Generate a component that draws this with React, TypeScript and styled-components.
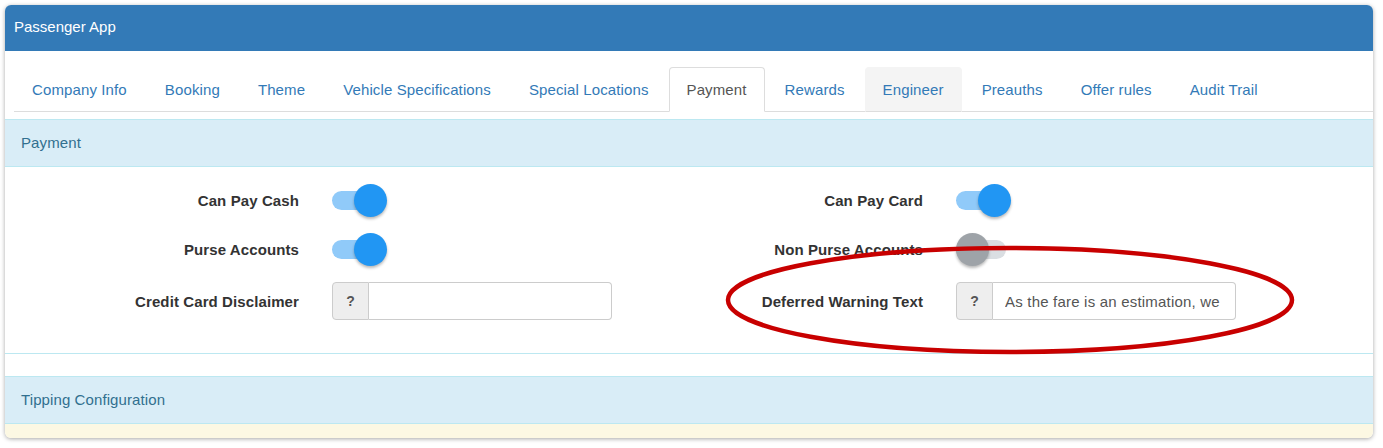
import React from "react";
import styled, { createGlobalStyle } from "styled-components";

const GlobalStyle = createGlobalStyle`
  html, body {
    margin: 0;
    padding: 0;
    background: #fff;
    font-family: "Liberation Sans", Arial, sans-serif;
    font-size: 15px;
    color: #333;
  }
  * {
    box-sizing: border-box;
  }
`;

const Page = styled.div`
  position: relative;
  width: 1383px;
  height: 448px;
  padding: 5px 10px 0 5px;
`;

const Panel = styled.div`
  background: #fff;
  border-radius: 6px;
  overflow: hidden;
  box-shadow: 0 1px 4px rgba(0, 0, 0, 0.35);
`;

const PanelHeading = styled.div`
  height: 46px;
  padding: 0 9px 4px;
  display: flex;
  align-items: center;
  background-color: #337ab7;
  color: #fff;
  font-size: 15px;
`;

const PanelBody = styled.div`
  padding-top: 16px;
`;

const TabList = styled.ul`
  display: flex;
  list-style: none;
  margin: 0 0 7px 9px;
  padding: 0;
  border-bottom: 1px solid #ddd;
`;

const Tab = styled.li<{ $active?: boolean; $hover?: boolean }>`
  margin: 0 2px -1px 0;
  padding: 11px 17px;
  line-height: 21px;
  font-size: 15px;
  letter-spacing: 0.12px;
  border: 1px solid transparent;
  border-radius: 4px 4px 0 0;
  color: #337ab7;
  white-space: nowrap;

  ${(p) =>
    p.$active &&
    `
    color: #555;
    background: #fff;
    border-color: #ddd;
    border-bottom-color: transparent;
  `}

  ${(p) =>
    p.$hover &&
    `
    background: #f4f4f4;
    border-color: #f4f4f4;
    border-bottom-color: #ddd;
  `}
`;

const SectionHeading = styled.div`
  height: 48px;
  padding: 0 16px 1px;
  display: flex;
  align-items: center;
  background-color: #d9edf7;
  border-top: 1px solid #bce8f1;
  border-bottom: 1px solid #bce8f1;
  color: #31708f;
  font-size: 15px;
  letter-spacing: 0.1px;
`;

const Section = styled.section`
  border-bottom: 1px solid #bce8f1;
  margin-bottom: 22px;
`;

const FormGrid = styled.div`
  display: grid;
  grid-template-columns: 624px 624px;
  padding: 17px 0 33px 16px;
`;

const FormColumn = styled.div`
  display: flex;
  flex-direction: column;
  gap: 16px;
`;

const FieldRow = styled.div`
  display: grid;
  grid-template-columns: 278px 280px;
  column-gap: 33px;
  align-items: center;
  min-height: 33px;
`;

const Label = styled.label`
  text-align: right;
  font-weight: bold;
  font-size: 15px;
  color: #333;
  letter-spacing: 0.1px;
`;

const SwitchBox = styled.div`
  position: relative;
  width: 56px;
  height: 33px;
`;

const Track = styled.div<{ $on: boolean }>`
  position: absolute;
  left: 0;
  top: 7px;
  width: 50px;
  height: 19px;
  border-radius: 10px;
  background: ${(p) => (p.$on ? "#90caf9" : "#dadee2")};
`;

const Knob = styled.div<{ $on: boolean }>`
  position: absolute;
  top: 0;
  left: ${(p) => (p.$on ? "22px" : "0")};
  width: 33px;
  height: 33px;
  border-radius: 50%;
  background: ${(p) => (p.$on ? "#2196f3" : "#9ea3a8")};
  box-shadow: 0 2px 3px rgba(0, 0, 0, 0.28);
`;

const InputGroup = styled.div`
  display: flex;
  width: 280px;
  height: 38px;
`;

const Addon = styled.span`
  width: 37px;
  display: flex;
  align-items: center;
  justify-content: center;
  background: #eee;
  border: 1px solid #ccc;
  border-radius: 4px 0 0 4px;
  color: #555;
  font-weight: bold;
  font-size: 14px;
`;

const TextInput = styled.input`
  flex: 1;
  min-width: 0;
  height: 100%;
  padding: 0 12px;
  border: 1px solid #ccc;
  border-left: none;
  border-radius: 0 4px 4px 0;
  font-family: "Liberation Sans", Arial, sans-serif;
  font-size: 15px;
  letter-spacing: 0.2px;
  color: #555;
  outline: none;
`;

const FooterStrip = styled.div`
  height: 14px;
  background: #fcf8e3;
`;

const Annotation = styled.svg`
  position: absolute;
  left: 0;
  top: 0;
  pointer-events: none;
`;

const Switch: React.FC<{ on: boolean }> = ({ on }) => (
  <SwitchBox>
    <Track $on={on} />
    <Knob $on={on} />
  </SwitchBox>
);

const HelpInput: React.FC<{ value?: string }> = ({ value }) => (
  <InputGroup>
    <Addon>?</Addon>
    <TextInput type="text" defaultValue={value} readOnly />
  </InputGroup>
);

const tabs = [
  "Company Info",
  "Booking",
  "Theme",
  "Vehicle Specifications",
  "Special Locations",
  "Payment",
  "Rewards",
  "Engineer",
  "Preauths",
  "Offer rules",
  "Audit Trail",
];

const App: React.FC = () => {
  return (
    <Page>
      <GlobalStyle />
      <Panel>
        <PanelHeading>Passenger App</PanelHeading>
        <PanelBody>
          <TabList>
            {tabs.map((t) => (
              <Tab key={t} $active={t === "Payment"} $hover={t === "Engineer"}>
                {t}
              </Tab>
            ))}
          </TabList>

          <Section>
            <SectionHeading>Payment</SectionHeading>
            <FormGrid>
              <FormColumn>
                <FieldRow>
                  <Label>Can Pay Cash</Label>
                  <Switch on />
                </FieldRow>
                <FieldRow>
                  <Label>Purse Accounts</Label>
                  <Switch on />
                </FieldRow>
                <FieldRow>
                  <Label>Credit Card Disclaimer</Label>
                  <HelpInput />
                </FieldRow>
              </FormColumn>
              <FormColumn>
                <FieldRow>
                  <Label>Can Pay Card</Label>
                  <Switch on />
                </FieldRow>
                <FieldRow>
                  <Label>Non Purse Accounts</Label>
                  <Switch on={false} />
                </FieldRow>
                <FieldRow>
                  <Label>Deferred Warning Text</Label>
                  <HelpInput value="As the fare is an estimation, we may charge you a different amount" />
                </FieldRow>
              </FormColumn>
            </FormGrid>
          </Section>

          <SectionHeading>Tipping Configuration</SectionHeading>
          <FooterStrip />
        </PanelBody>
      </Panel>

      {/* red highlight drawn over the screenshot */}
      <Annotation width="1383" height="448" viewBox="0 0 1383 448">
        <ellipse
          cx="1010"
          cy="300"
          rx="282"
          ry="52"
          fill="none"
          stroke="#c80000"
          strokeWidth="4.5"
        />
      </Annotation>
    </Page>
  );
};

export default App;
